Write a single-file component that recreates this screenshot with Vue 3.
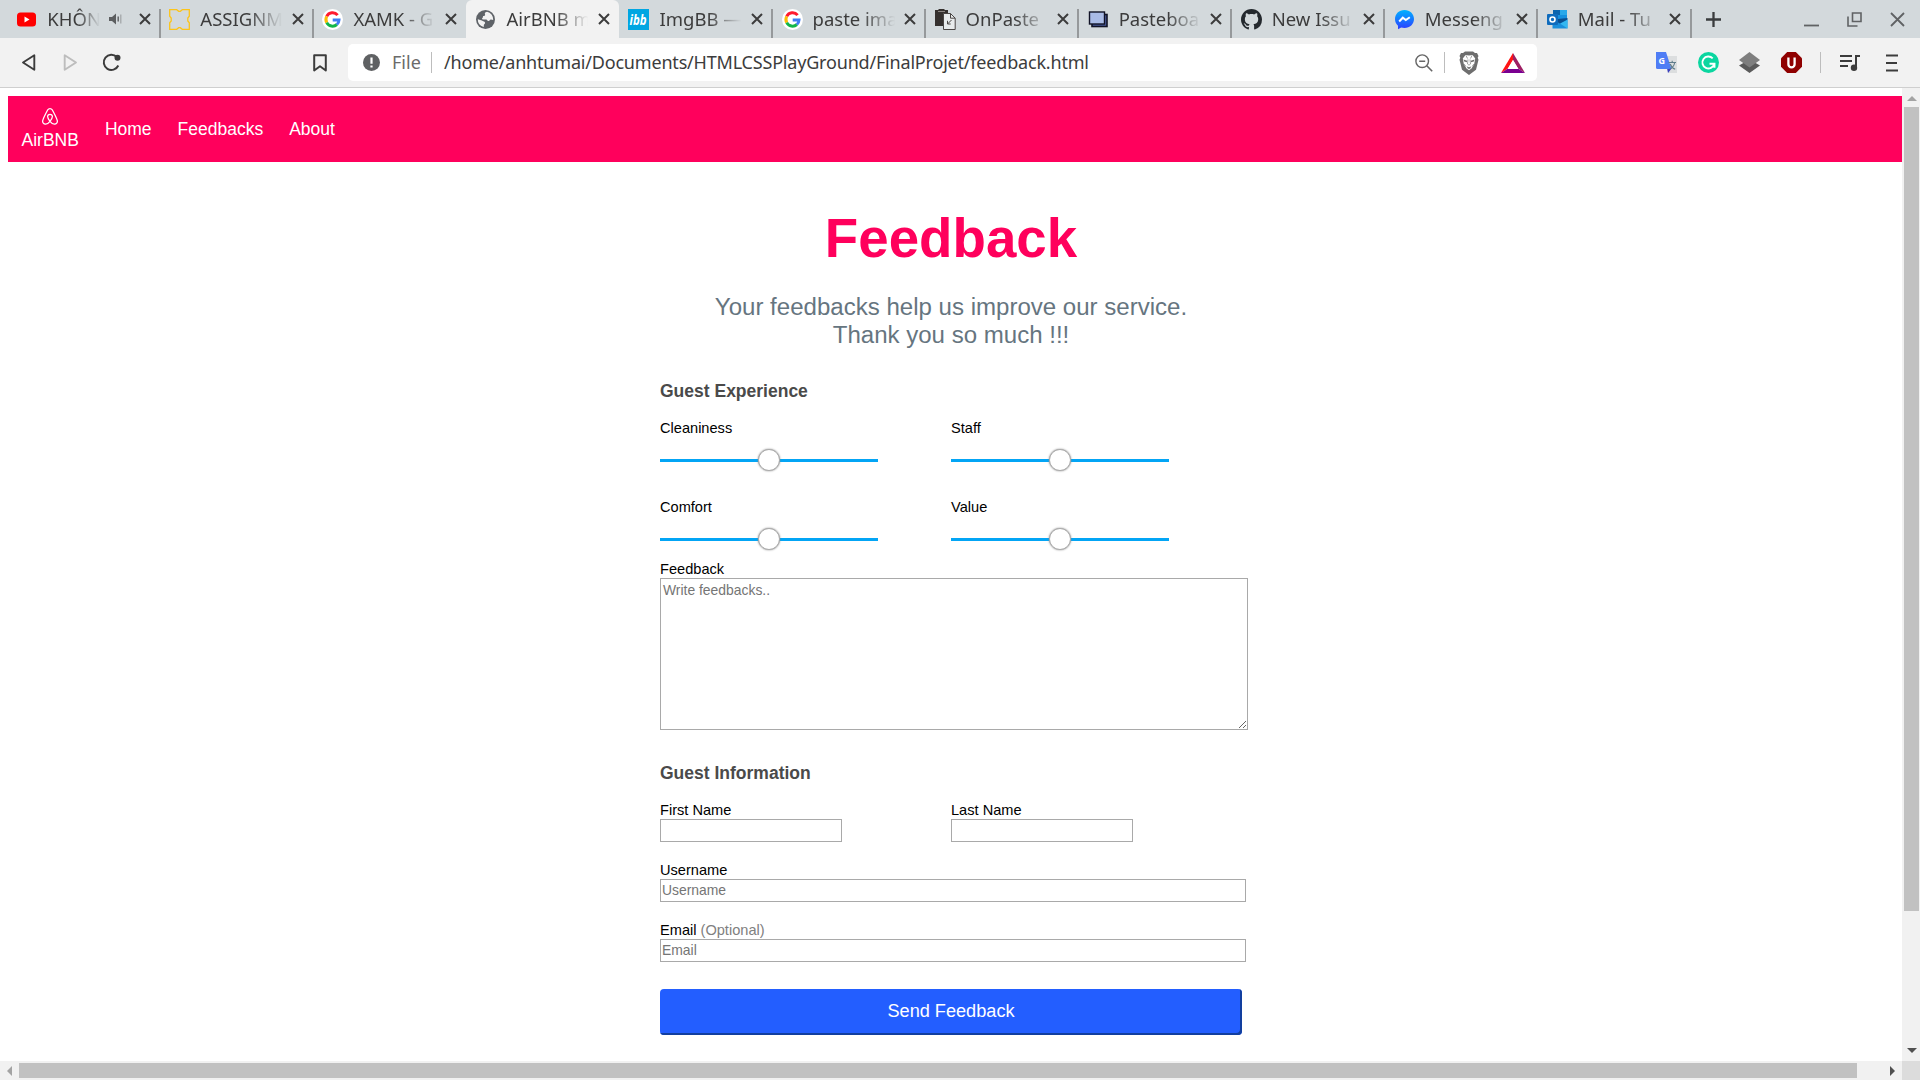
<script setup>
import { ref } from 'vue'

const tabs = [
  { icon: 'youtube', title: 'KHÔN', audio: true },
  { icon: 'frame', title: 'ASSIGNM' },
  { icon: 'google', title: 'XAMK - G' },
  { icon: 'globe', title: 'AirBNB m', active: true },
  { icon: 'ibb', title: 'ImgBB —' },
  { icon: 'google', title: 'paste ima' },
  { icon: 'onpaste', title: 'OnPaste' },
  { icon: 'pasteboard', title: 'Pasteboa' },
  { icon: 'github', title: 'New Issu' },
  { icon: 'messenger', title: 'Messeng' },
  { icon: 'outlook', title: 'Mail - Tu' },
]
const links = ['Home', 'Feedbacks', 'About']
const ratings = ref([
  { name: 'Cleaniness', value: 50 },
  { name: 'Staff', value: 50 },
  { name: 'Comfort', value: 50 },
  { name: 'Value', value: 50 },
])
</script>

<template>
  <div class="browser">
    <header class="tabbar">
      <div class="tabs">
        <div v-for="(t, i) in tabs" :key="i" class="tab" :class="{ active: t.active, noline: t.active || tabs[i + 1]?.active }">
          <svg class="favicon" viewBox="0 0 21 21">
            <g v-if="t.icon === 'youtube'">
              <rect x="1" y="3.5" width="19" height="14" rx="3.5" fill="#f00" />
              <path d="M8.500 7.500v6l5-3z" fill="#fff" />
            </g>
            <path v-else-if="t.icon === 'frame'" d="M.7.7h7l2 1.6h1.6l2-1.6h7v6.5L18.8 9v3l1.5 1.8v6.5h-7l-2-1.6H9.700l-2 1.600h-7v-6.500L2.200 12V9L.7 7.200z" fill="none" stroke="#fcc419" stroke-width="1.300" />
            <g v-else-if="t.icon === 'google'">
              <circle cx="10.500" cy="10.500" r="10.500" fill="#fff" />
              <g fill="none" stroke-width="3">
                <path d="M15.600 6.100A6.600 6.600 0 0 0 4.700 7.400" stroke="#ff1a2e" />
                <path d="M4.700 7.400a6.600 6.600 0 0 0 0 6.200" stroke="#fbbc05" />
                <path d="M4.700 13.600a6.600 6.600 0 0 0 10.200 1.900" stroke="#12b548" />
                <path d="M14.900 15.500a6.600 6.600 0 0 0 2.100-4.500h-6.300" stroke="#3f7cf4" />
              </g>
            </g>
            <g v-else-if="t.icon === 'globe'">
              <circle cx="10.500" cy="10.500" r="9.500" fill="#5f6368" />
              <path d="M12 2.800c-2 .3-2.500 1.600-2 2.700.7.900-.6 1.500-1.600 1.600-.8.200-.2 1.500-.9 1.900-.9.500-.5 1.400.6 1.400h3c1.400.200 1.300 1.600 2.600 1.600 1 0 1.100-1.600 2.300-1.500l2.200.6A7.700 7.700 0 0 0 12 2.800zM2.800 10.300c1.200.6 3.200.6 4.500 1.400 1 .7 2.700.7 2.800 2.100.1 1.300-1.200 1.400-1.300 2.300 0 .7.300 1.300-.3 1.800a7.700 7.700 0 0 1-5.700-7.600z" fill="#f2f2f2" />
            </g>
            <g v-else-if="t.icon === 'ibb'">
              <rect width="21" height="21" fill="#00a6e2" />
              <text x="1.500" y="15.500" textLength="17" lengthAdjust="spacingAndGlyphs" class="ibb">ibb</text>
            </g>
            <g v-else-if="t.icon === 'onpaste'">
              <path d="M0 1h3l1-1h5l1 1h3v16H0z" fill="#35302e" />
              <path d="M3 2.500h7" stroke="#8b8582" />
              <path d="M8.500 4.500h7l4.700 4.700v11.300H8.500z" fill="#e8ebec" stroke="#4a4644" />
              <path d="M15.500 4.500v4.700h4.700M16.500 11l-4 4m0-3.200V15h3.200" fill="none" stroke="#4a4644" />
            </g>
            <g v-else-if="t.icon === 'pasteboard'" stroke="#111326">
              <rect x="4" y="5.500" width="15" height="12" fill="#4b5d9e" stroke-width="1.600" />
              <rect x="1.500" y="3" width="15" height="12" fill="#a9bbe6" stroke-width="1.400" />
            </g>
            <path v-else-if="t.icon === 'github'" transform="scale(1.3125)" d="M8 0C3.580 0 0 3.580 0 8c0 3.540 2.290 6.530 5.470 7.590.4.070.550-.170.550-.380 0-.190-.010-.820-.010-1.490-2.010.370-2.530-.490-2.690-.940-.090-.230-.480-.940-.820-1.130-.280-.150-.680-.520-.010-.530.630-.010 1.080.580 1.230.820.720 1.210 1.870.870 2.330.660.070-.520.280-.870.510-1.070-1.780-.200-3.640-.890-3.640-3.950 0-.870.310-1.590.820-2.150-.080-.200-.360-1.020.080-2.120 0 0 .670-.210 2.200.820.640-.180 1.320-.270 2-.270s1.360.090 2 .270c1.530-1.040 2.200-.820 2.200-.820.440 1.100.160 1.920.080 2.120.510.560.820 1.270.820 2.150 0 3.070-1.870 3.750-3.650 3.950.290.250.540.730.540 1.480 0 1.070-.010 1.930-.010 2.200 0 .210.150.460.550.380A8.010 8.010 0 0 0 16 8c0-4.420-3.580-8-8-8z" fill="#24292e" />
            <g v-else-if="t.icon === 'messenger'">
              <defs><linearGradient id="msg" x2="0" y2="1"><stop stop-color="#00b2ff" /><stop offset="1" stop-color="#2c3dff" /></linearGradient></defs>
              <path d="M10.500 1C5.100 1 1 4.900 1 10c0 2.800 1.100 5.100 3 6.700v3.500l3.200-1.700c1 .300 2.100.500 3.300.5 5.400 0 9.500-3.900 9.500-9S15.900 1 10.500 1z" fill="url(#msg)" />
              <path d="M5.200 12.500 8.800 8.700l3 2.300 4-2.800" fill="none" stroke="#fff" stroke-width="2" />
            </g>
            <g v-else>
              <rect x="6" y="1" width="14" height="10" fill="#1490df" />
              <path d="M6 1h7v5H6z" fill="#0a64ae" /><path d="M13 1h7v5h-7z" fill="#28a8ea" />
              <path d="M5.500 10.500h15V19.500h-15z" fill="#1a8fdc" /><path d="m13 14.500 7.500-4v9z" fill="#35b8f1" /><path d="m5.500 10.500 7.500 4 7.500-4V9z" fill="#0a4f91" />
              <rect y="5" width="11" height="11" rx="1" fill="#0f6cbd" />
              <circle cx="5.500" cy="10.500" r="2.500" fill="none" stroke="#fff" stroke-width="1.600" />
            </g>
          </svg>
          <span class="title" :class="{ short: t.audio }">{{ t.title }}</span>
          <svg v-if="t.audio" class="audio" viewBox="0 0 13 14"><path d="M0 5h3l4-3.500v11L3 9H0z" fill="#5c5e60" /><path d="M9.200 4.500v5" stroke="#5c5e60" stroke-width="1.400" /><path d="M11.800 2.500v9" stroke="#a0a3a5" stroke-width="1.200" /></svg>
          <svg class="close" viewBox="0 0 12 12"><path d="m1 1 10 10M11 1 1 11" stroke="#3c3c3c" stroke-width="2" /></svg>
        </div>
      </div>
      <svg class="plus" viewBox="0 0 15 15"><path d="M7.500 0v15M0 7.500h15" stroke="#3a3c3e" stroke-width="2.300" /></svg>
      <div class="window-buttons">
        <svg viewBox="0 0 15 15"><path d="M0 13.500h15" stroke="#606264" stroke-width="1.800" /></svg>
        <svg viewBox="0 0 15 15"><path d="M5.500 1h8.500v8.500H5.500zM1 4.500V14h9.500" fill="none" stroke="#606264" stroke-width="1.600" /></svg>
        <svg viewBox="0 0 15 15"><path d="m1 1 13 13M14 1 1 14" stroke="#606264" stroke-width="1.800" /></svg>
      </div>
    </header>

    <div class="toolbar">
      <div class="nav-buttons">
        <svg width="15" height="19" viewBox="0 0 15 19"><path d="M13.300 2.200v14.600L2 9.500z" fill="none" stroke="#3c3c3c" stroke-width="1.900" stroke-linejoin="round" /></svg>
        <svg width="15" height="19" viewBox="0 0 15 19"><path d="M1.700 2.200v14.600L13 9.500z" fill="none" stroke="#bdbdbd" stroke-width="1.900" stroke-linejoin="round" /></svg>
        <svg width="19" height="19" viewBox="0 0 19 19"><path d="M14.800 4A7.600 7.600 0 1 0 16.300 12.500" fill="none" stroke="#3c3c3c" stroke-width="2" /><circle cx="15.500" cy="4.800" r="3" fill="#3c3c3c" /></svg>
      </div>
      <svg class="bookmark" viewBox="0 0 14 18"><path d="M1.200 1.200h11.600v15.300L7 12.300l-5.800 4.200z" fill="none" stroke="#3c3c3c" stroke-width="2" stroke-linejoin="round" /></svg>
      <div class="address">
        <svg class="info" viewBox="0 0 17 17"><circle cx="8.500" cy="8.500" r="8.500" fill="#5f6163" /><path d="M8.500 3.500v6.200M8.500 11.400v2.200" stroke="#fff" stroke-width="2.200" /></svg>
        <span class="scheme">File</span>
        <i class="rule"></i>
        <span class="url">/home/anhtumai/Documents/HTMLCSSPlayGround/FinalProjet/feedback.html</span>
        <svg class="lens" viewBox="0 0 18 18"><circle cx="7.200" cy="7.200" r="6.300" fill="none" stroke="#666" stroke-width="1.400" /><path d="M4.200 7.200h6M11.800 11.800l5.400 5.400" stroke="#666" stroke-width="1.600" /></svg>
        <i class="rule second"></i>
        <svg class="lion" viewBox="0 0 20 24">
          <path d="M6 .5h8L16 2h2l1.500 3-.8 1.700.8 2-2.500 10L10 24l-7-5.300L.5 8.700l.8-2L.5 5 2 2h2z" fill="#6e6e6e" />
          <path d="m6.500 4 3.500.6 3.500-.6 2.700 3.400-1 5.600-2.700 4.500-2.500 1.800-2.500-1.800L4.800 13l-1-5.600z" fill="#fff" />
          <path d="m4.500 8.500 3.700 1.300-.3 1.400-2.700-.6zm11 0-3.700 1.300.3 1.400 2.700-.6zM8 15.500l2 .8 2-.8-.5 1.800-1.500.8-1.500-.8z" fill="#6e6e6e" />
          <path d="M9 8.500 8.500 13l1.500 1.200 1.500-1.200-.5-4.500M5 13l2 2.500m8-2.500-2 2.500M7 4.500l1.500 3m4.500-3-1.500 3" fill="none" stroke="#8a8a8a" stroke-width=".8" />
        </svg>
        <svg class="bat" viewBox="0 0 24 20"><path d="M12 0 0 20l7-4.500 5-8.500z" fill="#ff1414" /><path d="m12 0 12 20-7-4.500L12 7z" fill="#9e1f63" /><path d="M0 20h24l-7-4.500H7z" fill="#7a0090" /><path d="m12 7 5.500 9h-11z" fill="#fff" /></svg>
      </div>
      <div class="extensions">
        <svg viewBox="0 0 21 21">
          <path d="M9 4h12v17H12z" fill="#dcdedf" /><path d="M11 16h5l-4 5z" fill="#3b3fbd" /><path d="M0 0h10l5.500 17H1.500A1.500 1.500 0 0 1 0 15.500z" fill="#4f7df5" />
          <text x="2.500" y="12" class="tr-g">G</text>
          <path d="M12.500 10.500H20M16.200 8.800v1.700m2.500 0c-.5 3-2.700 5.500-5 6.500m.5-5c.8 2.500 2.500 4.300 5 5.300" fill="none" stroke="#607d8b" stroke-width="1.100" />
        </svg>
        <svg viewBox="0 0 21 21"><circle cx="10.500" cy="10.500" r="10.500" fill="#0bd6a0" /><path d="M14.700 6.300A6 6 0 1 0 16.200 12M11.500 11.700h5v4" fill="none" stroke="#fff" stroke-width="1.900" /></svg>
        <svg viewBox="0 0 21 21"><path d="m0 13.500 10.500-6 10.500 6L10.500 21z" fill="#5a5a5a" /><path d="M0 8 10.500 0 21 8l-10.500 7.500z" fill="#7e7e7e" /></svg>
        <svg viewBox="0 0 21 21"><path d="M6.200 0h8.600L21 6.200v8.600L14.800 21H6.200L0 14.800V6.200z" fill="#8f0000" /><path d="M7.400 5.500v6.700a3.100 3.100 0 0 0 6.200 0V5.500" fill="none" stroke="#fff" stroke-width="2.300" /></svg>
      </div>
      <i class="rule third"></i>
      <svg class="playlist" viewBox="0 0 21 18"><path d="M0 2h12M0 7h12M0 12h8" stroke="#3c3c3c" stroke-width="2" /><path d="M20 2h-4v11" fill="none" stroke="#3c3c3c" stroke-width="2" /><circle cx="14" cy="13.800" r="3.200" fill="#3c3c3c" /></svg>
      <svg class="menu" viewBox="0 0 12 18"><path d="M0 1.500h12M0 9H11M0 16.500h12" stroke="#3c3c3c" stroke-width="1.900" /></svg>
    </div>

    <div class="viewport">
      <main class="page">
        <nav>
          <a class="brand">
            <svg viewBox="0 0 16 17" fill="none" stroke="#fff" stroke-width="1.250"><path d="M8 13.300C6.500 11.500 5.600 10 5.600 8.600 5.600 7.200 6.600 6.300 8 6.300s2.400.9 2.400 2.300c0 1.400-.9 2.900-2.400 4.700-1.600 2-3 3-4.500 2.900-1.800-.1-3.200-1.600-2.800-3.500C1 11.200 4 5 5.500 2.200 6.200 1.200 7 .7 8 .7s1.800.5 2.500 1.500C12 5 15 11.200 15.300 12.700c.4 1.900-1 3.400-2.800 3.500-1.500.1-2.900-.9-4.500-2.900z" /></svg>
            <span>AirBNB</span>
          </a>
          <a v-for="l in links" :key="l">{{ l }}</a>
        </nav>
        <form @submit.prevent>
          <h1>Feedback</h1>
          <p class="lead">Your feedbacks help us improve our service.<br />Thank you so much !!!</p>
          <h2>Guest Experience</h2>
          <div class="ratings">
            <label v-for="r in ratings" :key="r.name">{{ r.name }}<input v-model="r.value" type="range" /></label>
          </div>
          <label class="comment">Feedback<textarea placeholder="Write feedbacks.."></textarea></label>
          <h2>Guest Information</h2>
          <div class="names">
            <label>First Name<input type="text" /></label>
            <label>Last Name<input type="text" /></label>
          </div>
          <label class="field">Username<input type="text" placeholder="Username" /></label>
          <label class="field"><span>Email <em>(Optional)</em></span><input type="text" placeholder="Email" /></label>
          <button>Send Feedback</button>
        </form>
      </main>
      <div class="vscroll">
        <svg width="10" height="5" viewBox="0 0 10 5"><path d="M0 5 5 0l5 5z" fill="#a3a3a3" /></svg>
        <div class="vthumb"></div>
        <svg width="10" height="5" viewBox="0 0 10 5"><path d="m0 0 5 5 5-5z" fill="#505050" /></svg>
      </div>
    </div>
    <div class="hscroll">
      <svg width="5" height="10" viewBox="0 0 5 10"><path d="M5 0 0 5l5 5z" fill="#a3a3a3" /></svg>
      <div class="hthumb"></div>
      <svg class="right" width="5" height="10" viewBox="0 0 5 10"><path d="m0 0 5 5-5 5z" fill="#505050" /></svg>
      <div class="corner"></div>
    </div>
  </div>
</template>

<style>
body { margin: 0; overflow: hidden; }
</style>

<style scoped>
* { box-sizing: border-box; }
svg { display: block; flex: none; }
.browser { width: 1920px; height: 1080px; display: flex; flex-direction: column; background: #fff; font-family: "Liberation Sans", Arial, sans-serif; overflow: hidden; }

.tabbar { height: 38px; flex: none; background: #d3d9dc; display: flex; align-items: center; font: 18.5px/38px "Noto Sans", sans-serif; color: #3c3c3c; }
.tabs { display: flex; margin-left: 7px; }
.tab { width: 153.050px; height: 38px; padding-left: 9.300px; display: flex; align-items: center; position: relative; }
.tab::after { content: ""; position: absolute; right: -1px; top: 9px; width: 2px; height: 29px; background: #96999b; }
.tab.noline::after { display: none; }
.tab.active { background: #f2f2f2; border-radius: 6px 6px 0 0; }
.favicon { width: 21px; height: 21px; }
.ibb { font: italic bold 14px "Noto Sans", sans-serif; fill: #fff; }
.title { width: 84px; margin-left: 10px; white-space: nowrap; -webkit-mask-image: linear-gradient(90deg, #000 58%, transparent 98%); mask-image: linear-gradient(90deg, #000 58%, transparent 98%); }
.title.short { width: 54px; }
.audio { width: 13px; height: 14px; margin: 0 5px 0 8px; }
.close { width: 12px; height: 12px; margin-left: auto; margin-right: 9.500px; }
.plus { width: 15px; height: 15px; margin-left: 15px; }
.window-buttons { display: flex; gap: 28px; margin-left: 83px; }
.window-buttons svg { width: 15px; height: 15px; }

.toolbar { height: 50px; flex: none; background: #f2f2f2; border-bottom: 1px solid #cfcfcf; display: flex; align-items: center; font: 18px/37px "Noto Sans", sans-serif; color: #3c3c3c; }
.nav-buttons { display: flex; align-items: center; margin-left: 21px; width: 292px; }
.nav-buttons svg + svg { margin-left: 27px; }
.nav-buttons svg + svg + svg { margin-left: 24px; }
.bookmark { width: 14px; height: 18px; }
.address { margin-left: 21px; width: 1189px; height: 37px; border-radius: 5px; background: #fff; display: flex; align-items: center; }
.info { width: 17px; height: 17px; margin-left: 15px; }
.scheme { margin-left: 12px; width: 39px; color: #6b6b6b; }
.rule { width: 1px; height: 21px; background: #bdbdbd; }
.url { margin-left: 12px; width: 971px; white-space: nowrap; letter-spacing: -.19px; }
.lens { width: 18px; height: 18px; }
.second { margin-left: 11px; }
.lion { width: 20px; height: 24px; margin-left: 14px; }
.bat { width: 24px; height: 20px; margin-left: 22px; }
.extensions { display: flex; gap: 20.500px; margin-left: 119px; }
.extensions svg { width: 21px; height: 21px; }
.tr-g { font: bold 9px "Open Sans", sans-serif; fill: #fff; }
.third { margin-left: 18px; }
.playlist { width: 21px; height: 18px; margin-left: 19px; }
.menu { width: 12px; height: 18px; margin-left: 25px; }

.viewport { height: 973px; flex: none; display: flex; }
.page { width: 1902px; padding: 8px 0 0 8px; overflow: hidden; }
nav { height: 66px; background: #ff005c; color: #fff; font-size: 17.500px; display: flex; align-items: center; padding-left: 13.500px; gap: 26px; }
.brand { display: flex; flex-direction: column; align-items: center; }
.brand svg { width: 16px; height: 17px; }
.brand span { line-height: 20px; margin-top: 5px; }
form { width: 582px; margin: 0 0 0 652px; font-size: 14.6px; color: #000; }
h1 { margin: 44px 0 0; height: 64px; line-height: 64px; font-size: 54.700px; text-align: center; color: #ff005c; }
.lead { margin: 23px -20px 0; font-size: 24.05px; line-height: 28px; text-align: center; color: #66757f; }
h2 { margin: 32px 0 0; height: 20px; line-height: 20px; font-size: 17.500px; color: #4a4a4a; }
label { display: flex; flex-direction: column; line-height: 17px; }
.ratings { display: grid; grid-template-columns: 291px 291px; row-gap: 25px; margin-top: 19px; }
.ratings label { height: 54px; }
input[type="range"] { appearance: none; width: 218px; height: 3px; background: #03a5f5; margin: 22px 0 0; }
input[type="range"]::-webkit-slider-thumb { appearance: none; width: 22px; height: 22px; margin-top: -1px; border-radius: 50%; background: #fff; border: 1px solid #aaa; box-shadow: 0 0 2px #888; }
.comment { margin: 8px 0 0; padding-bottom: 1px; }
input[type="text"], textarea { border: 1px solid #a9a9a9; border-radius: 0; outline: none; margin: 0; font: 13.900px "Liberation Sans", Arial, sans-serif; background: #fff; }
::placeholder { color: #757575; }
textarea { width: 588px; height: 152px; padding: 3px 2px 2px; }
.names { display: grid; grid-template-columns: 291px 291px; margin-top: 19px; }
input[type="text"] { width: 182px; height: 23px; padding: 0 1px; }
.field { margin-top: 20px; }
.field input[type="text"] { width: 586px; padding-bottom: 1px; }
em { font-style: normal; color: #808080; }
button { display: block; width: 582px; height: 46px; margin: 27px 0 0; padding: 0 0 1px; background: #235eff; color: #fff; border: 0; border-radius: 4px; box-shadow: inset -2px -2px #123f9f; font: 18.150px "Liberation Sans", Arial, sans-serif; }

.vscroll { width: 18px; background: #f1f1f1; display: flex; flex-direction: column; align-items: center; padding-top: 8px; }
.vthumb { width: 15px; height: 804px; margin: 6px 0 137px 1px; background: #c1c1c1; }
.vscroll svg { margin-left: 1px; }
.hscroll { height: 19px; background: #f1f1f1; display: flex; align-items: center; }
.hscroll svg { margin-left: 7px; }
.hthumb { width: 1838px; height: 15px; margin-left: 7px; background: #c1c1c1; }
.hscroll .right { margin-left: 33px; }
.corner { width: 18px; height: 19px; margin-left: auto; background: #dcdcdc; }
</style>
